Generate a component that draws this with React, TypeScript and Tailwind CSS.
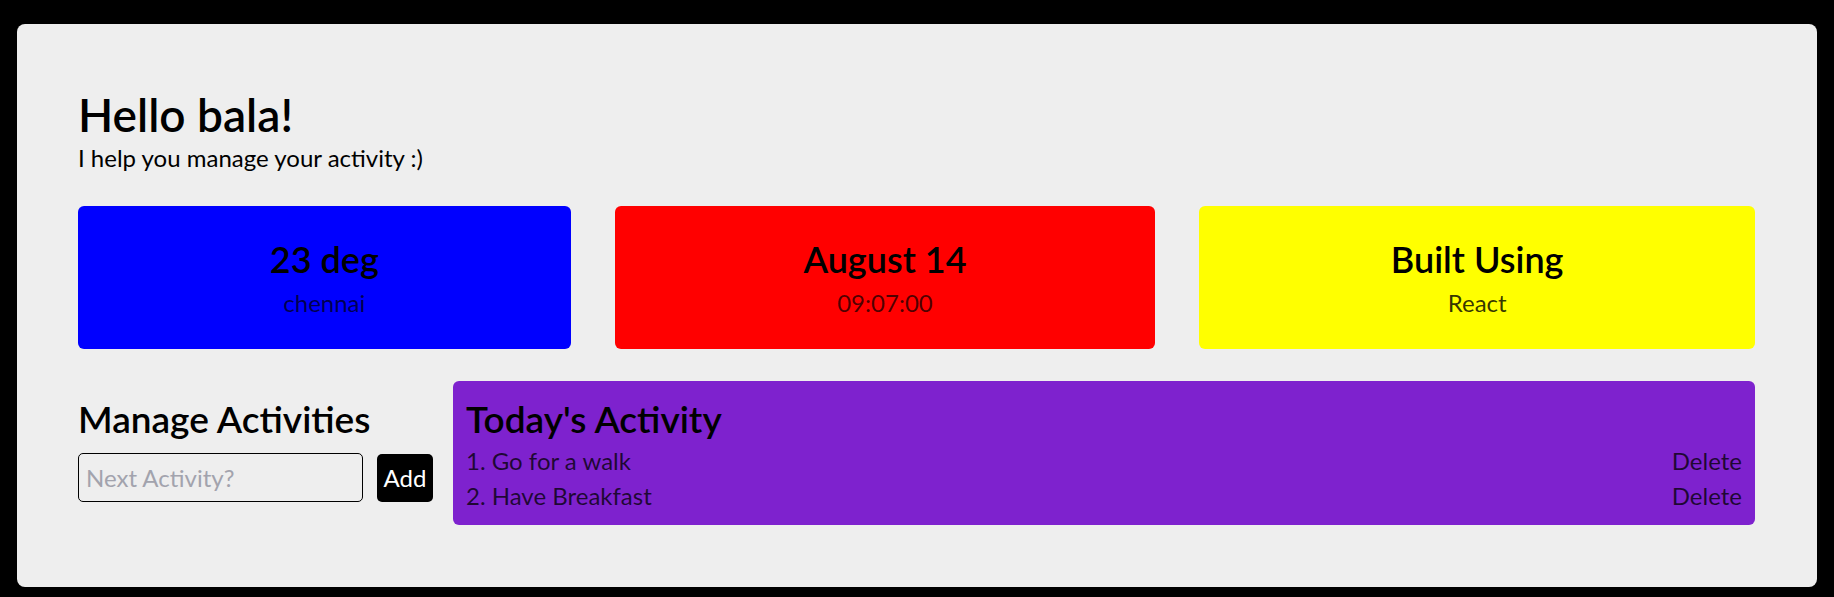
import React from "react";

const font = { fontFamily: "Lato, 'Noto Sans', sans-serif" };

export default function App() {
  return (
    <div className="bg-black h-[597px] pt-[24px] pl-[17px] pr-[17px]" style={font}>
      <div className="bg-[#eeeeee] h-[563px] rounded-[8px] pt-[64px] pl-[61px] pr-[62px] text-black">
        <h1 className="text-[46px] leading-[54px] font-semibold">Hello bala!</h1>
        <p className="text-[24px] leading-[32px]">I help you manage your activity :)</p>

        <div className="mt-[32px] flex gap-[44px]">
          <div className="flex-[492_1_0%] h-[143px] rounded-[6px] bg-[#0000ff] flex flex-col items-center justify-center gap-[6px]">
            <div className="text-[36px] leading-[44px] font-semibold">23 deg</div>
            <div className="text-[24px] leading-[32px] text-black/70">chennai</div>
          </div>
          <div className="flex-[540_1_0%] h-[143px] rounded-[6px] bg-[#ff0000] flex flex-col items-center justify-center gap-[6px]">
            <div className="text-[36px] leading-[44px] font-semibold">August 14</div>
            <div className="text-[24px] leading-[32px] text-black/70">09:07:00</div>
          </div>
          <div className="flex-[555_1_0%] h-[143px] rounded-[6px] bg-[#ffff00] flex flex-col items-center justify-center gap-[6px]">
            <div className="text-[36px] leading-[44px] font-semibold">Built Using</div>
            <div className="text-[24px] leading-[32px] text-black/80">React</div>
          </div>
        </div>

        <div className="mt-[32px] flex items-start gap-[20px]">
          <div className="w-[355px] pt-[16px]">
            <h2 className="text-[37px] leading-[44px] font-semibold whitespace-nowrap">Manage Activities</h2>
            <div className="mt-[12px] flex items-center gap-[14px]">
              <input
                placeholder="Next Activity?"
                className="w-[285px] h-[49px] border border-black rounded-[5px] px-[7px] text-[24px] bg-transparent placeholder:text-[#a2a3ad] outline-none"
                style={font}
              />
              <button
                className="w-[56px] h-[48px] bg-black text-white rounded-[5px] text-[24px] flex items-center justify-center"
                style={font}
              >
                Add
              </button>
            </div>
          </div>
          <div className="flex-1 bg-[#7e22ce] rounded-[6px] pt-[16px] pb-[12px] px-[13px]">
            <h2 className="text-[37px] leading-[44px] font-semibold">Today's Activity</h2>
            <div className="mt-[2px] text-[24px] leading-[35px] text-black/75">
              <div className="flex justify-between">
                <span>1. Go for a walk</span>
                <span>Delete</span>
              </div>
              <div className="flex justify-between">
                <span>2. Have Breakfast</span>
                <span>Delete</span>
              </div>
            </div>
          </div>
        </div>
      </div>
    </div>
  );
}
